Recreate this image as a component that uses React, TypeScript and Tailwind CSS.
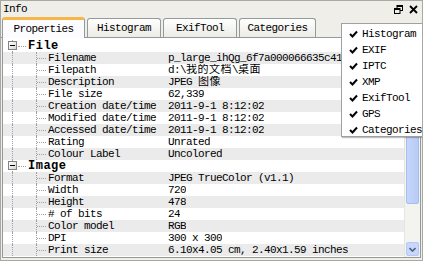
import React from 'react';

type Row = { label: string; value?: string; group?: boolean };

const rows: Row[] = [
  { label: 'File', group: true },
  { label: 'Filename', value: 'p_large_ihQg_6f7a000066635c41' },
  { label: 'Filepath', value: 'd:\\我的文档\\桌面' },
  { label: 'Description', value: 'JPEG 图像' },
  { label: 'File size', value: '62,339' },
  { label: 'Creation date/time', value: '2011-9-1 8:12:02' },
  { label: 'Modified date/time', value: '2011-9-1 8:12:02' },
  { label: 'Accessed date/time', value: '2011-9-1 8:12:02' },
  { label: 'Rating', value: 'Unrated' },
  { label: 'Colour Label', value: 'Uncolored' },
  { label: 'Image', group: true },
  { label: 'Format', value: 'JPEG TrueColor (v1.1)' },
  { label: 'Width', value: '720' },
  { label: 'Height', value: '478' },
  { label: '# of bits', value: '24' },
  { label: 'Color model', value: 'RGB' },
  { label: 'DPI', value: '300 x 300' },
  { label: 'Print size', value: '6.10x4.05 cm, 2.40x1.59 inches' },
];

const tabs = ['Properties', 'Histogram', 'ExifTool', 'Categories'];
const menuItems = ['Histogram', 'EXIF', 'IPTC', 'XMP', 'ExifTool', 'GPS', 'Categories'];

// CJK runs: drop the negative tracking so they keep full width
const Value = ({ text }: { text: string }) => (
  <>
    {text.split(/([\u4e00-\u9fff]+)/).map((part, i) =>
      /[\u4e00-\u9fff]/.test(part) ? (
        <span key={i} className="text-[11px] leading-none tracking-[0.5px]">
          {part}
        </span>
      ) : (
        <span key={i} className="whitespace-pre">{part}</span>
      ),
    )}
  </>
);

const Check = () => (
  <svg width="9" height="8" viewBox="0 0 9 8" className="shrink-0">
    <path d="M1 4 L3.5 6.5 L8 1.5" stroke="#000" strokeWidth="2" fill="none" />
  </svg>
);

const MinusBox = () => (
  <div className="w-[9px] h-[9px] border border-[#848484] bg-gradient-to-br from-white to-[#d8d8d0] flex items-center justify-center">
    <div className="w-[5px] h-px bg-black" />
  </div>
);

const App = () => {
  return (
    <div
      className="w-[423px] h-[261px] bg-[#efeee9] border border-[#a9a9a3] relative overflow-hidden flex flex-col text-[11px] tracking-[-0.6px] text-black"
      style={{ fontFamily: '"Liberation Mono", "Noto Sans CJK SC", monospace' }}
    >
      {/* title bar */}
      <div className="h-[16px] flex items-center pl-[2px] pr-[4px] shrink-0">
        <span className="leading-none">Info</span>
        <div className="ml-auto flex items-center gap-[6px]">
          <svg width="9" height="9" viewBox="0 0 9 9">
            <rect x="3" y="0.5" width="5.5" height="5" fill="none" stroke="#000" />
            <rect x="3" y="0.5" width="5.5" height="1.5" fill="#000" />
            <rect x="0.5" y="3.5" width="5.5" height="5" fill="#efeee9" stroke="#000" />
            <rect x="0.5" y="3.5" width="5.5" height="1.5" fill="#000" />
          </svg>
          <svg width="9" height="9" viewBox="0 0 9 9">
            <path d="M1 1 L8 8 M8 1 L1 8" stroke="#000" strokeWidth="1.8" />
          </svg>
        </div>
      </div>

      {/* tabs */}
      <div className="h-[21px] flex items-end pl-[1px] gap-[2px] shrink-0 border-b border-[#919b9c]">
        {tabs.map((t, i) =>
          i === 0 ? (
            <div
              key={t}
              className="h-[21px] w-[83px] -mb-px bg-[#fcfcfe] border border-b-0 border-[#919b9c] border-t-[3px] border-t-[#f7b64a] rounded-t-[3px] flex items-center justify-center"
            >
              {t}
            </div>
          ) : (
            <div
              key={t}
              className="h-[19px] px-[10px] bg-gradient-to-b from-white to-[#ecebe5] border border-b-0 border-[#919b9c] rounded-t-[3px] flex items-center justify-center"
              style={{ width: [83, 74, 74, 77][i] }}
            >
              {t}
            </div>
          ),
        )}
      </div>

      {/* content */}
      <div className="flex-1 flex mx-[1px] mb-[2px] border border-t-0 border-[#919b9c] bg-white overflow-hidden">
        <div className="flex-1 relative pt-[2px] overflow-hidden">
          {rows.map((r, i) => (
            <div
              key={r.label}
              className={`h-[12px] relative ${!r.group && i % 2 === 1 ? 'bg-[#ebebeb]' : ''}`}
            >
              {/* vertical tree line */}
              <div className="absolute left-[9px] top-0 bottom-0 border-l border-dotted border-[#a0a0a0]" />
              {r.group ? (
                <>
                  <div className="absolute left-[5px] top-[1px] bg-white">
                    <MinusBox />
                  </div>
                  <div className="absolute left-[15px] top-[6px] w-[8px] border-t border-dotted border-[#a0a0a0]" />
                  <span className="absolute left-[25px] top-0 h-[12px] flex items-center font-bold text-[12px] leading-none tracking-[0.5px]">
                    {r.label}
                  </span>
                </>
              ) : (
                <>
                  <div className="absolute left-[33px] top-0 bottom-0 border-l border-dotted border-[#a0a0a0]" />
                  <div className="absolute left-[34px] top-[6px] w-[9px] border-t border-dotted border-[#a0a0a0]" />
                  <span className="absolute left-[45px] top-0 h-[12px] flex items-center leading-none">
                    {r.label}
                  </span>
                  <span className="absolute left-[165px] top-0 h-[12px] flex items-center leading-none whitespace-nowrap overflow-hidden">
                    <Value text={r.value ?? ''} />
                  </span>
                </>
              )}
            </div>
          ))}
        </div>

        {/* scrollbar */}
        <div className="w-[16px] bg-[#f3f3ef] flex flex-col pl-[1px] pr-px border-l border-[#e6e6e0]">
          <div className="h-[14px] mt-[1px] rounded-[2px] bg-[#c8d7fb] border border-[#b3c8f5] flex items-center justify-center">
            <svg width="7" height="5" viewBox="0 0 7 5">
              <path d="M0.5 4 L3.5 1 L6.5 4" stroke="#4d6185" strokeWidth="1.6" fill="none" />
            </svg>
          </div>
          <div className="h-[150px] mt-[1px] rounded-[2px] bg-gradient-to-r from-[#c6d6fb] to-[#b8cbf6] border border-[#a5bdf2]" />
          <div className="flex-1" />
          <div className="h-[14px] mb-[1px] rounded-[2px] bg-[#c8d7fb] border border-[#b3c8f5] flex items-center justify-center">
            <svg width="7" height="5" viewBox="0 0 7 5">
              <path d="M0.5 1 L3.5 4 L6.5 1" stroke="#4d6185" strokeWidth="1.6" fill="none" />
            </svg>
          </div>
        </div>
      </div>

      {/* popup menu */}
      <div className="absolute left-[340px] top-[22px] w-[82px] h-[114px] bg-white border border-[#a0a0a0] shadow-[1px_1px_1px_rgba(0,0,0,0.25)] pt-[2px]">
        {menuItems.map((m) => (
          <div key={m} className="h-[16px] flex items-center gap-[4px] pl-[7px]">
            <Check />
            <span className="leading-none">{m}</span>
          </div>
        ))}
      </div>
    </div>
  );
};

export default App;
